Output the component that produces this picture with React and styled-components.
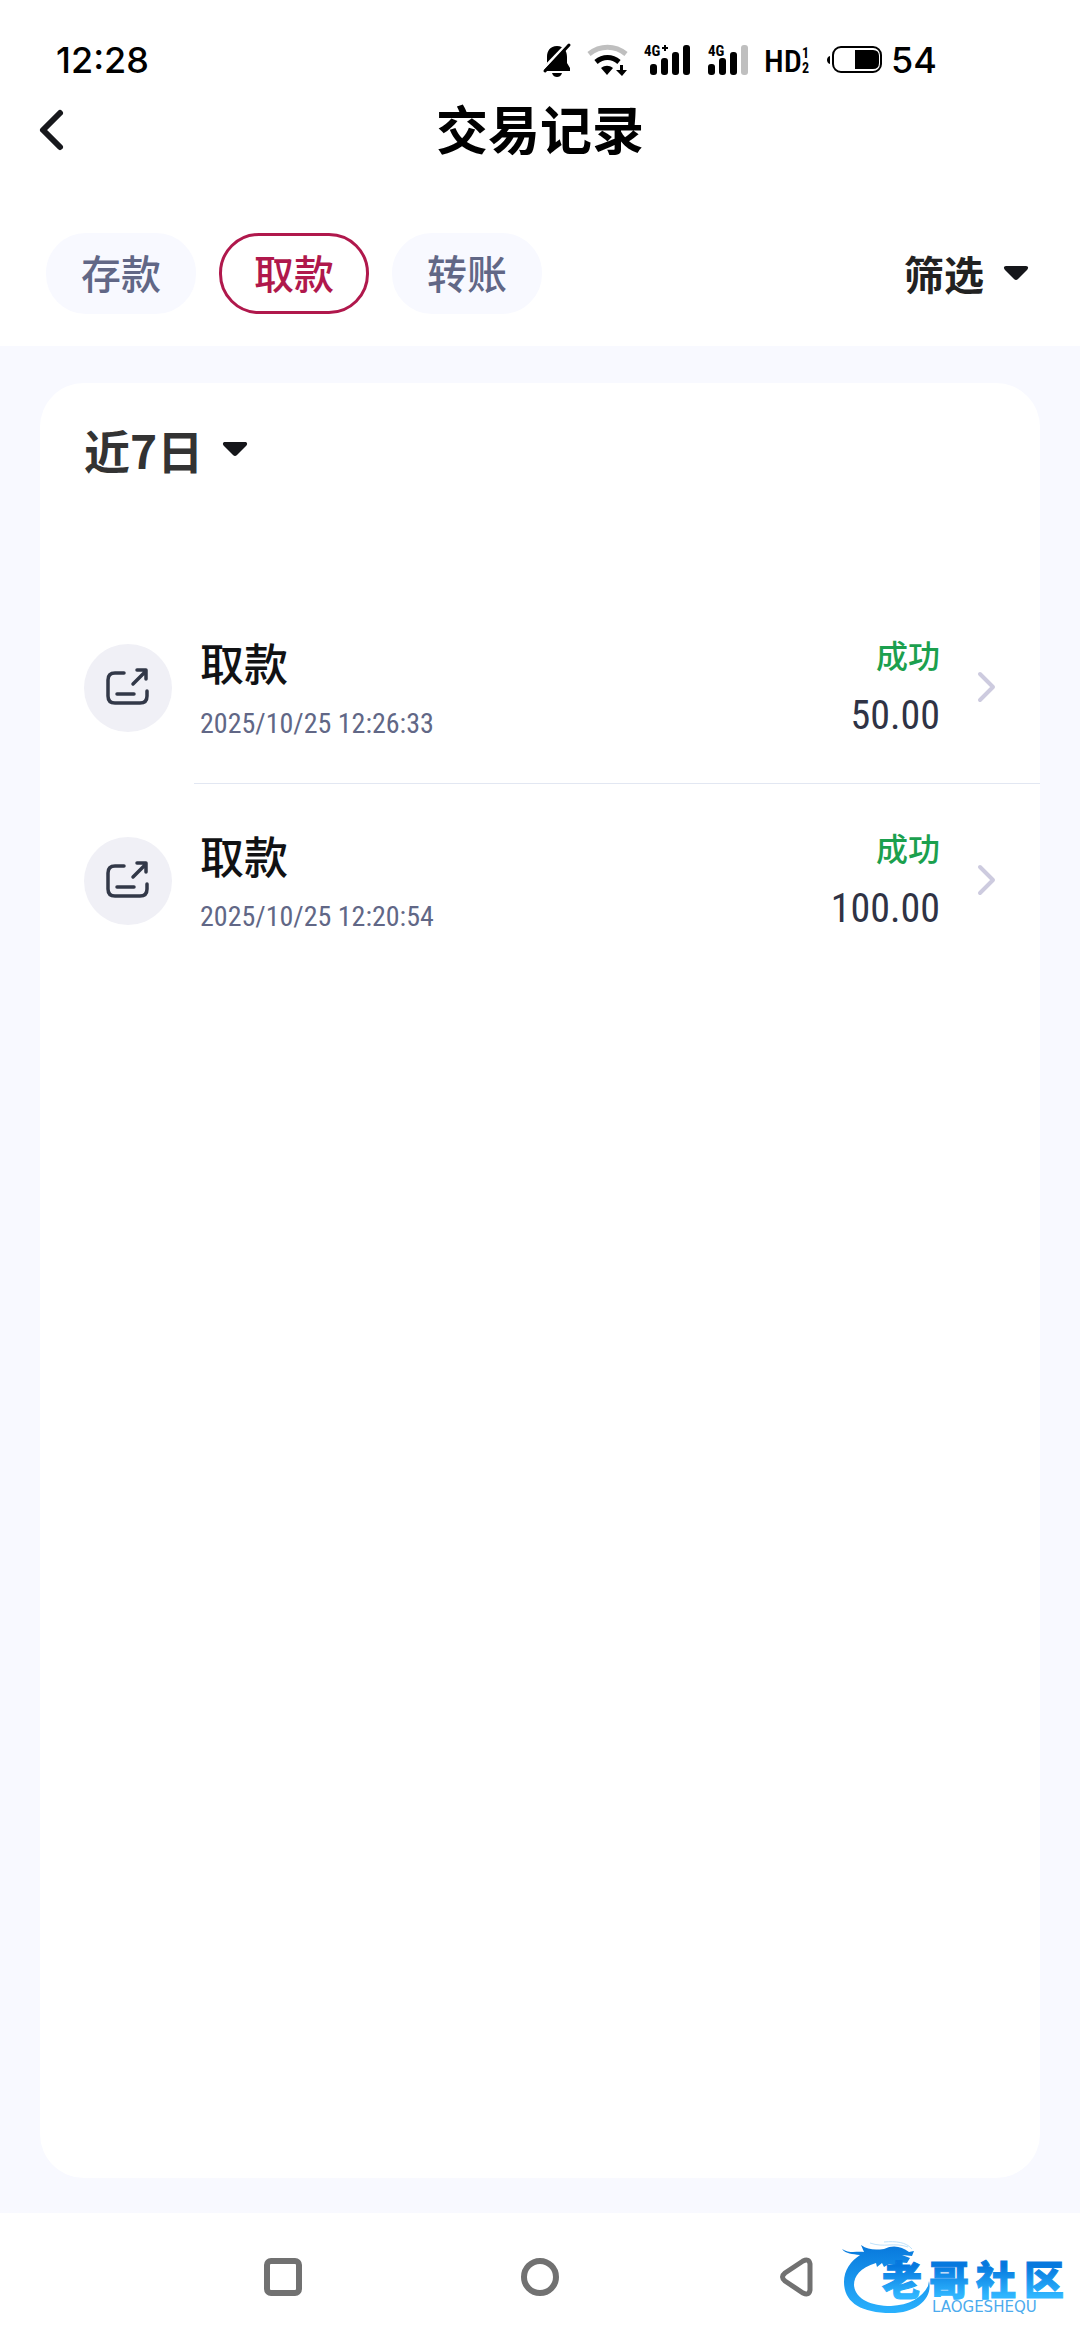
import React from "react";
import styled, { createGlobalStyle } from "styled-components";

const GlobalStyle = createGlobalStyle`
  * {
    box-sizing: border-box;
  }
  body {
    margin: 0;
    background-color: #fff;
    color: #111214;
    font-family: Inter, "Noto Sans CJK SC", sans-serif;
  }
  button {
    padding: 0;
    border: none;
    background: none;
    color: inherit;
    font-family: inherit;
    cursor: pointer;
  }
  svg {
    display: block;
    flex-shrink: 0;
    overflow: visible;
  }
`;

const Page = styled.div`
  min-height: 100vh;
  display: flex;
  flex-direction: column;
`;

const StatusBar = styled.div`
  height: 100px;
  padding: 20px 143px 0 56px;
  display: flex;
  align-items: center;
  justify-content: space-between;
  color: #000;
  font-size: 36px;
  font-weight: 500;
  line-height: 44px;
`;

const StatusIcons = styled.div`
  display: flex;
  align-items: center;
  gap: 17px;
`;

const Battery = styled.div`
  display: flex;
  align-items: center;
  gap: 8px;
`;

const TitleBar = styled.header`
  height: 60px;
  padding: 0 40px;
  display: grid;
  grid-template-columns: 1fr auto 1fr;
  align-items: center;
`;

const BackButton = styled.button`
  justify-self: start;
`;

const Title = styled.h1`
  margin: 0;
  padding-bottom: 4px;
  color: #000;
  font-family: "Noto Sans CJK SC", sans-serif;
  font-size: 52px;
  font-weight: 700;
  line-height: 56px;
`;

const Toolbar = styled.div`
  padding: 73px 52px 32px 46px;
  display: flex;
  align-items: center;
  justify-content: space-between;
`;

const Tabs = styled.div`
  display: flex;
  gap: 23px;
`;

const Tab = styled.button`
  width: 150px;
  height: 81px;
  padding-bottom: 4px;
  border: 3px solid ${props => (props.$active ? "#b0184c" : "#f8f9ff")};
  border-radius: 40px;
  background-color: ${props => (props.$active ? "#fff" : "#f8f9ff")};
  color: ${props => (props.$active ? "#b0184c" : "#616786")};
  font-family: "Noto Sans CJK SC", sans-serif;
  font-size: 40px;
  font-weight: 500;
  line-height: 60px;
`;

const DropButton = styled.button`
  padding-bottom: 2px;
  display: flex;
  align-items: center;
  gap: 20px;
  color: ${props => (props.$large ? "#333" : "#222")};
  font-family: "Noto Sans CJK SC", sans-serif;
  font-size: ${props => (props.$large ? 46 : 40)}px;
  font-weight: 700;
  line-height: 60px;
`;

const Content = styled.main`
  flex: 1;
  padding: 37px 40px 35px;
  display: flex;
  background-color: #f8f9ff;
`;

const Card = styled.section`
  flex: 1;
  padding-top: 36px;
  border-radius: 44px;
  background-color: #fff;
`;

const CardHead = styled.div`
  padding: 0 44px 110px;
`;

const List = styled.ul`
  margin: 0;
  padding: 0;
  list-style: none;
`;

const Row = styled.li`
  height: 193px;
  padding-left: 44px;
  display: flex;
  align-items: center;
  gap: 22px;
`;

const RowIcon = styled.div`
  width: 88px;
  height: 88px;
  flex-shrink: 0;
  display: flex;
  align-items: center;
  justify-content: center;
  border-radius: 50%;
  background-color: #f0f0f6;
`;

const RowBody = styled.div`
  height: 100%;
  flex: 1;
  padding: 0 44px 0 6px;
  display: flex;
  align-items: center;
  border-bottom: 1px solid ${props => (props.$last ? "transparent" : "#e2e7f2")};
`;

const RowColumn = styled.div`
  padding-top: 4px;
  display: flex;
  flex-direction: column;
  gap: 10px;
  align-items: ${props => (props.$end ? "flex-end" : "flex-start")};
  margin-left: ${props => (props.$end ? "auto" : 0)};
`;

const RowTitle = styled.div`
  font-family: "Noto Sans CJK SC", sans-serif;
  font-size: 44px;
  font-weight: 500;
  line-height: 60px;
`;

const RowDate = styled.time`
  color: #616786;
  font-family: "Roboto Condensed", Roboto, sans-serif;
  font-size: 28px;
  line-height: 44px;
`;

const RowStatus = styled.div`
  color: #1ba04e;
  font-family: "Noto Sans CJK SC", sans-serif;
  font-size: 32px;
  font-weight: 500;
  line-height: 44px;
`;

const RowAmount = styled.div`
  color: #2f3345;
  font-family: "Roboto Condensed", Roboto, sans-serif;
  font-size: 40px;
  line-height: 60px;
`;

const Arrow = styled.div`
  margin-left: 38px;
`;

const NavBar = styled.nav`
  position: relative;
  height: 127px;
  padding: 0 263px;
  display: flex;
  align-items: center;
  justify-content: space-between;
`;

const Watermark = styled.svg`
  position: absolute;
  right: 12px;
  bottom: 20px;
`;

const MutedBellIcon = () => (
  <svg width="28" height="35" viewBox="0 0 28 35">
    <path
      d="M14 3C7 3 4 8 4 14v6L1 25v3h26v-3l-3-5v-6C24 8 21 3 14 3z"
      fill="#000"
    />
    <path d="M9 30h10c-1 3-3 4-5 4s-4-1-5-4z" fill="#000" />
    <path d="M-1 27L25 0" stroke="#fff" strokeWidth="3" />
    <path d="M2 28L26 2" stroke="#000" strokeWidth="3" strokeLinecap="round" />
  </svg>
);

const WifiIcon = () => (
  <svg width="39" height="31" viewBox="0 0 39 31" fill="none">
    <path d="M1 9C12 0 27 0 38 9" stroke="#bfbfbf" strokeWidth="5" />
    <path d="M8 17c7-6 16-6 23 0" stroke="#000" strokeWidth="5" />
    <path d="M13 23c4-3 8-3 12 0l-6 7z" fill="#000" />
    <path d="M32 20h3v5h4l-5 6-6-6h4z" fill="#000" />
  </svg>
);

const bars = [
  { x: 6, y: 19 },
  { x: 17, y: 13 },
  { x: 28, y: 7 },
  { x: 39, y: 0 }
];

const SignalIcon = ({ plus, weak }) => (
  <svg width={weak ? 41 : 46} height="30" viewBox={weak ? "5 0 41 30" : "0 0 46 30"}>
    {bars.map(({ x, y }, i) => (
      <rect
        key={x}
        x={x}
        y={y}
        width="7"
        height={30 - y}
        rx="3"
        fill={weak && i === 3 ? "#bfbfbf" : "#000"}
      />
    ))}
    <text
      x={weak ? 6 : 0}
      y="11"
      fontSize="15"
      fontWeight="700"
      fontFamily="'Roboto Condensed', Roboto, sans-serif"
    >
      4G
    </text>
    {plus && <path d="M18 3h6M21 0v6" stroke="#000" strokeWidth="2" />}
  </svg>
);

const HdIcon = () => (
  <svg
    width="45"
    height="32"
    viewBox="0 0 45 32"
    fontFamily="'Roboto Condensed', Roboto, sans-serif"
  >
    <text x="-1" y="28" fontSize="32" fontWeight="500">
      HD
    </text>
    <text x="37" y="14" fontSize="14" fontWeight="700">
      1
    </text>
    <text x="37" y="29" fontSize="14" fontWeight="700">
      2
    </text>
  </svg>
);

const BatteryIcon = () => (
  <svg width="56" height="28" viewBox="0 0 56 28">
    <path d="M3 10v8c-4-1-4-7 0-8z" fill="#000" />
    <rect x="6" y="1" width="48" height="25" rx="8" fill="none" stroke="#000" strokeWidth="2" />
    <path d="M28 4h18q6 0 6 6v7q0 6-6 6H28z" fill="#000" />
  </svg>
);

const BackIcon = () => (
  <svg width="24" height="42" viewBox="0 0 24 42" fill="none">
    <path
      d="M20 4L3 21l17 17"
      stroke="#17181c"
      strokeWidth="6"
      strokeLinecap="round"
      strokeLinejoin="round"
    />
  </svg>
);

const Caret = () => (
  <svg width="24" height="14" viewBox="0 0 24 14">
    <path
      d="M2 0h20c2 0 3 2 1 4l-9 9q-2 2-4 0L1 4C-1 2 0 0 2 0z"
      fill="#15161a"
    />
  </svg>
);

const WithdrawIcon = () => (
  <svg width="44" height="42" viewBox="0 0 44 42" fill="none">
    <g stroke="#323848" strokeWidth="3.5" strokeLinecap="round" strokeLinejoin="round">
      <path d="M18 6H9Q2 6 2 13v16q0 7 7 7h25q7 0 7-7v-5" />
      <path d="M11 27h17" />
      <path d="M27 17L40 4M31 3h9v9" />
    </g>
  </svg>
);

const ChevronIcon = () => (
  <svg width="18" height="30" viewBox="0 0 18 30" fill="none">
    <path
      d="M2 2l13 13L2 28"
      stroke="#cdcbdf"
      strokeWidth="4"
      strokeLinecap="round"
      strokeLinejoin="round"
    />
  </svg>
);

const CommunityLogo = () => (
  <Watermark width="228" height="84" viewBox="0 0 228 84">
    <defs>
      <linearGradient id="dragon" gradientUnits="userSpaceOnUse" x1="0" y1="10" x2="0" y2="80">
        <stop offset="0" stopColor="#0879dc" />
        <stop offset="1" stopColor="#2bb4ff" />
      </linearGradient>
      <linearGradient id="letters" gradientUnits="userSpaceOnUse" x1="0" y1="30" x2="0" y2="60">
        <stop offset="0" stopColor="#0678de" />
        <stop offset="1" stopColor="#2fb6ff" />
      </linearGradient>
    </defs>
    <path
      d="M2 13c8 5 14 2 22 3l-3-7c7 5 14 5 23 4 10-5 18-2 25 3l5-1-2 5-10-1 8 3-3 5-11-1 2 4-9-2-5 3-2-4-5 4-1-4C20 32 14 40 14 49c1 14 17 21 37 21 18-1 31-8 37-20l1-5c4 17-12 32-38 32C19 77 4 65 4 46 4 34 11 25 20 19 12 18 6 18 2 13z"
      fill="url(#dragon)"
    />
    <path d="M30 7c14 5 24-1 38 4M44 6c12-1 22 0 28 7" stroke="#bfe2fb" fill="none" />
    <g
      fill="url(#letters)"
      stroke="url(#letters)"
      fontFamily="'Noto Sans CJK SC', sans-serif"
      fontSize="40"
      fontWeight="900"
    >
      <text x="42" y="59">老</text>
      <text x="89" y="59">哥</text>
      <text x="136" y="59">社</text>
      <text x="184" y="59">区</text>
    </g>
    <text x="92" y="76" fill="#4cabee" fontFamily="'DejaVu Sans', sans-serif" fontSize="15">
      LAOGESHEQU
    </text>
  </Watermark>
);

const tabs = ["存款", "取款", "转账"];

const records = [
  { title: "取款", date: "2025/10/25 12:26:33", status: "成功", amount: "50.00" },
  { title: "取款", date: "2025/10/25 12:20:54", status: "成功", amount: "100.00" }
];

const App = () => (
  <Page>
    <GlobalStyle />
    <StatusBar>
      <span>12:28</span>
      <StatusIcons>
        <MutedBellIcon />
        <WifiIcon />
        <SignalIcon plus />
        <SignalIcon weak />
        <HdIcon />
        <Battery>
          <BatteryIcon />
          <span>54</span>
        </Battery>
      </StatusIcons>
    </StatusBar>
    <TitleBar>
      <BackButton aria-label="返回">
        <BackIcon />
      </BackButton>
      <Title>交易记录</Title>
    </TitleBar>
    <Toolbar>
      <Tabs>
        {tabs.map(tab => (
          <Tab key={tab} $active={tab === "取款"}>
            {tab}
          </Tab>
        ))}
      </Tabs>
      <DropButton>
        筛选
        <Caret />
      </DropButton>
    </Toolbar>
    <Content>
      <Card>
        <CardHead>
          <DropButton $large>
            近7日
            <Caret />
          </DropButton>
        </CardHead>
        <List>
          {records.map((record, i) => (
            <Row key={record.date}>
              <RowIcon>
                <WithdrawIcon />
              </RowIcon>
              <RowBody $last={i === records.length - 1}>
                <RowColumn>
                  <RowTitle>{record.title}</RowTitle>
                  <RowDate>{record.date}</RowDate>
                </RowColumn>
                <RowColumn $end>
                  <RowStatus>{record.status}</RowStatus>
                  <RowAmount>{record.amount}</RowAmount>
                </RowColumn>
                <Arrow>
                  <ChevronIcon />
                </Arrow>
              </RowBody>
            </Row>
          ))}
        </List>
      </Card>
    </Content>
    <NavBar>
      <button aria-label="最近任务">
        <svg width="40" height="40" viewBox="0 0 40 40" fill="none">
          <rect x="4" y="4" width="32" height="32" rx="4" stroke="#717171" strokeWidth="6" />
        </svg>
      </button>
      <button aria-label="主屏幕">
        <svg width="40" height="40" viewBox="0 0 40 40" fill="none">
          <circle cx="20" cy="20" r="16" stroke="#717171" strokeWidth="6" />
        </svg>
      </button>
      <button aria-label="后退">
        <svg width="40" height="40" viewBox="0 0 40 40" fill="none">
          <path
            d="M26 4L8 16q-5 4 0 8l18 12q6 3 7-3V7q-1-6-7-3z"
            stroke="#717171"
            strokeWidth="5"
          />
        </svg>
      </button>
      <CommunityLogo />
    </NavBar>
  </Page>
);

export default App;
